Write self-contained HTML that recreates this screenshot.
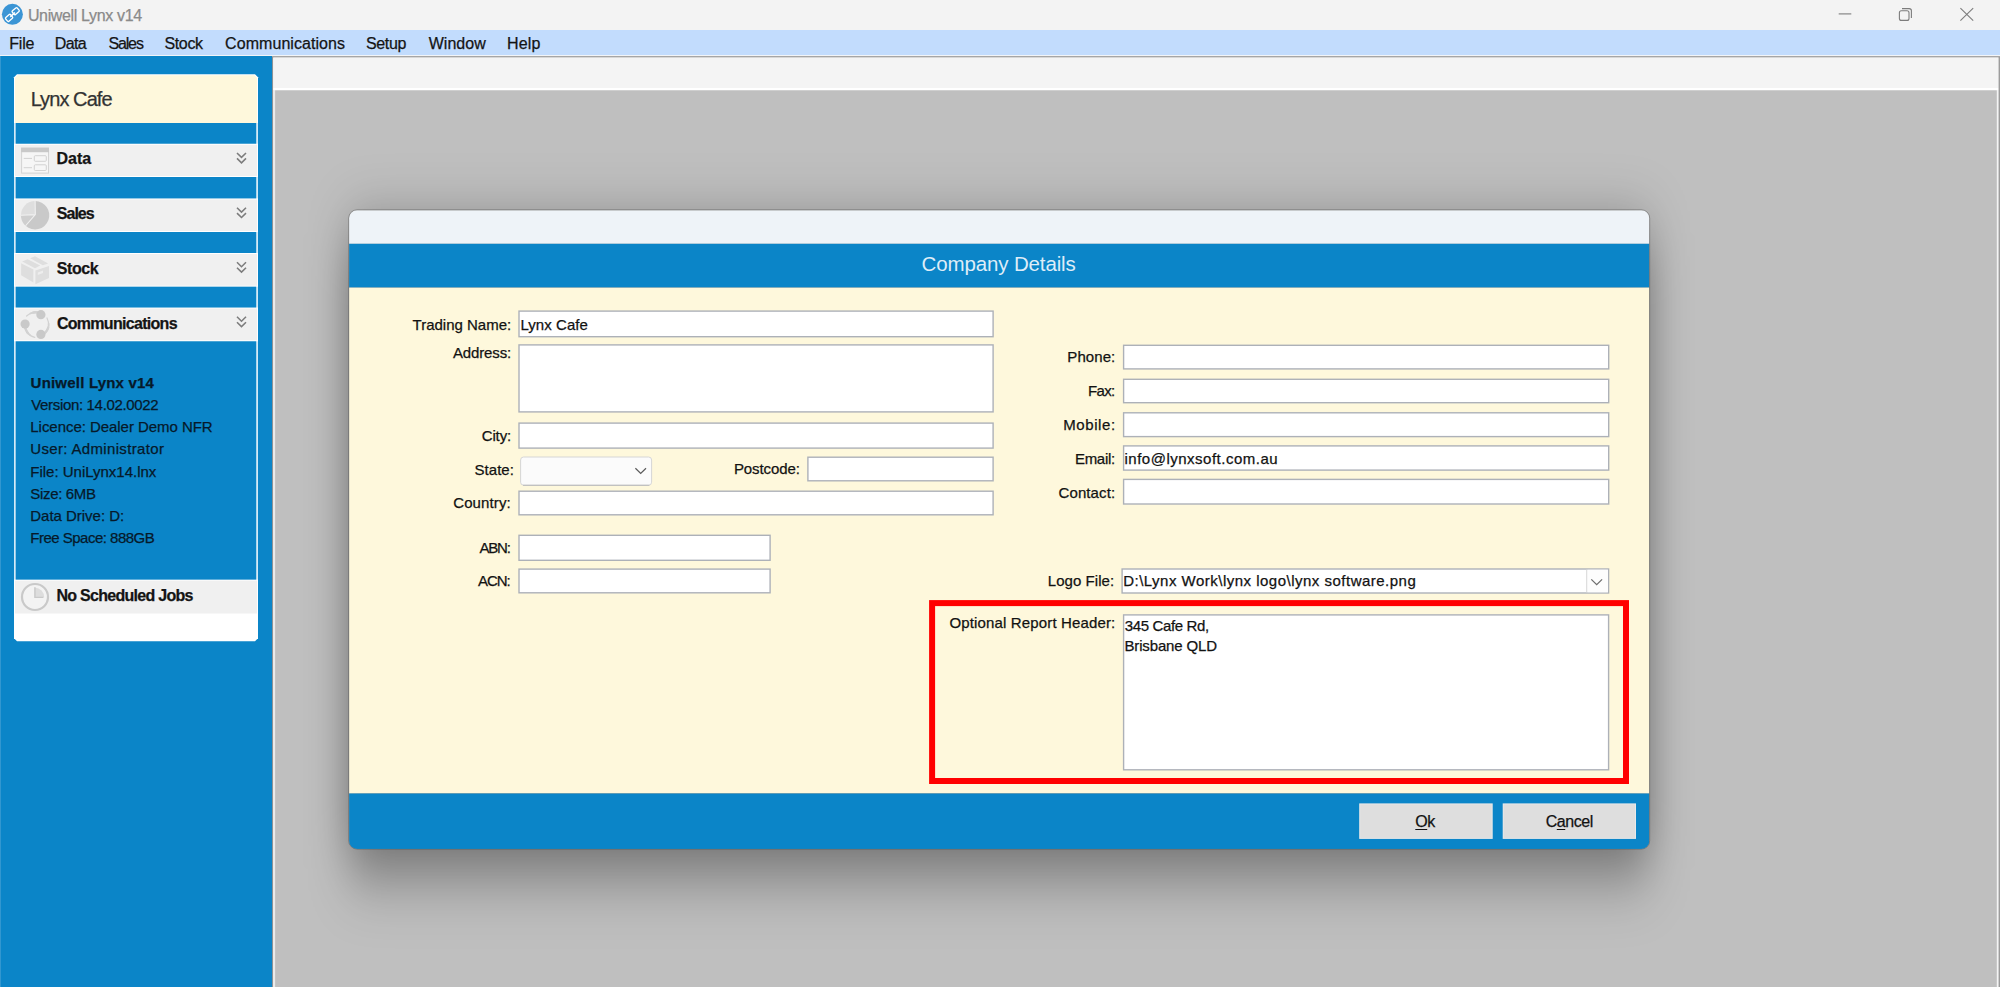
<!DOCTYPE html>
<html lang="en"><head><meta charset="utf-8"><title>Uniwell Lynx v14</title>
<style>
html,body{margin:0;padding:0}
body{width:2000px;height:987px;overflow:hidden;position:relative;background:#f3f3f3;font-family:"Liberation Sans",sans-serif}
.t{position:absolute;white-space:pre;line-height:1;margin:0;padding:0;-webkit-text-stroke:0.25px currentColor}
.t u{text-decoration:underline;text-underline-offset:2px;text-decoration-thickness:1px}
.layer{position:absolute;left:0;top:0;width:2000px;height:987px;display:block}

</style></head>
<body>
<svg id="bg" class="layer" width="2000" height="987" viewBox="0 0 2000 987">
<rect x="0.00" y="0.00" width="2000.00" height="30.00" fill="#f3f3f3" />
<rect x="0.00" y="30.00" width="2000.00" height="25.00" fill="#c2dcfd" />
<rect x="0.00" y="55.00" width="2000.00" height="1.00" fill="#f2f4f7" />
<rect x="0.00" y="56.00" width="272.00" height="931.00" fill="#0b85c8" />
<rect x="0.00" y="56.00" width="0.80" height="931.00" fill="#3c9bd2" />
<rect x="272.00" y="56.00" width="1728.00" height="1.60" fill="#a6a6a6" />
<rect x="272.00" y="57.00" width="1.20" height="930.00" fill="#8c9296" />
<rect x="273.20" y="57.60" width="1725.40" height="30.40" fill="#f4f4f4" />
<rect x="273.20" y="88.00" width="1725.40" height="2.30" fill="#ffffff" />
<rect x="273.20" y="90.30" width="1.90" height="896.70" fill="#ebebeb" />
<rect x="275.10" y="90.30" width="1721.80" height="896.70" fill="#bfbfbf" />
<rect x="1996.90" y="90.30" width="1.70" height="896.70" fill="#f4f4f4" />
<rect x="1998.60" y="57.00" width="1.40" height="930.00" fill="#9c9c9c" />
<circle cx="12.4" cy="14.3" r="10.5" fill="#3b95d5"/>
<g fill="none" stroke="#ffffff" stroke-width="1.3"><rect x="-3.25" y="-2.4" width="6.5" height="4.8" rx="1" transform="translate(15.7,11.2) rotate(-41)"/><rect x="-3.25" y="-2.4" width="6.5" height="4.8" rx="1" transform="translate(9.1,17.9) rotate(-41)"/><path d="M10.3 16.8 L14.9 12.5" stroke-width="1.6"/></g>
<g fill="none" stroke="#7c7c7c" stroke-width="1.1"><path d="M1838.7 13.9 H1851.3"/><rect x="1899.4" y="10.8" width="9.6" height="9.6" rx="2"/><path d="M1902 8.6 H1909.2 Q1911.4 8.6 1911.4 10.8 V18"/><path d="M1960.4 8.2 L1973.2 20.6 M1973.2 8.2 L1960.4 20.6"/></g>
<polygon points="17,74.3 255,74.3 258,77.3 258,638.3 255,641.3 17,641.3 14,638.3 14,77.3" fill="#ffffff"/>
<polygon points="17.6,75.3 254.4,75.3 257,77.89999999999999 257,123 15,123 15,77.89999999999999" fill="#fef8dc"/>
<rect x="14.00" y="123.00" width="244.00" height="20.70" fill="#d4eaf7" />
<rect x="15.70" y="123.00" width="240.50" height="20.70" fill="#0b85c8" />
<rect x="14.00" y="177.00" width="244.00" height="21.40" fill="#d4eaf7" />
<rect x="15.70" y="177.00" width="240.50" height="21.40" fill="#0b85c8" />
<rect x="14.00" y="232.00" width="244.00" height="21.00" fill="#d4eaf7" />
<rect x="15.70" y="232.00" width="240.50" height="21.00" fill="#0b85c8" />
<rect x="14.00" y="286.70" width="244.00" height="20.80" fill="#d4eaf7" />
<rect x="15.70" y="286.70" width="240.50" height="20.80" fill="#0b85c8" />
<rect x="14.00" y="341.30" width="244.00" height="238.30" fill="#d4eaf7" />
<rect x="15.70" y="341.30" width="240.50" height="238.30" fill="#0b85c8" />
<rect x="15.00" y="144.70" width="242.00" height="31.30" fill="#f0f0f0" />
<rect x="15.00" y="199.40" width="242.00" height="31.60" fill="#f0f0f0" />
<rect x="15.00" y="254.00" width="242.00" height="31.70" fill="#f0f0f0" />
<rect x="15.00" y="308.50" width="242.00" height="31.80" fill="#f0f0f0" />
<rect x="15.00" y="580.60" width="242.00" height="32.90" fill="#f0f0f0" />
<path d="M237 153.00 L241.5 157.40 L246 153.00 M237 158.40 L241.5 162.80 L246 158.40" fill="none" stroke="#7d7d7d" stroke-width="1.55"/>
<path d="M237 207.70 L241.5 212.10 L246 207.70 M237 213.10 L241.5 217.50 L246 213.10" fill="none" stroke="#7d7d7d" stroke-width="1.55"/>
<path d="M237 262.30 L241.5 266.70 L246 262.30 M237 267.70 L241.5 272.10 L246 267.70" fill="none" stroke="#7d7d7d" stroke-width="1.55"/>
<path d="M237 316.80 L241.5 321.20 L246 316.80 M237 322.20 L241.5 326.60 L246 322.20" fill="none" stroke="#7d7d7d" stroke-width="1.55"/>
<rect x="21.6" y="148.2" width="26.9" height="24.9" fill="#f6f6f6" stroke="#d3d3d3" stroke-width="1"/>
<rect x="21.10" y="147.70" width="27.90" height="4.50" fill="#c9c9c9" />
<g fill="none" stroke="#d2d2d2" stroke-width="1"><path d="M23.7 158.4 H32 M23.7 167.7 H32"/><rect x="34.3" y="155.7" width="12" height="5.6" rx="1"/><rect x="34.3" y="164.8" width="12" height="5.7" rx="1"/></g>
<path d="M35.3 214.6 L35.10 201.00 A14.2 14.2 0 1 1 25.60 225.75 Z" fill="#c9c9c9"/>
<path d="M35.3 214.6 L25.60 225.75 A14.2 14.2 0 0 1 20.90 215.20 Z" fill="#cfcfcf"/>
<path d="M35.3 214.6 L20.90 215.20 A14.2 14.2 0 0 1 35.10 201.00 Z" fill="#dedede"/>
<path d="M35.10 201.00 L35.3 214.6 L25.60 225.75 M35.3 214.6 L20.90 215.20" fill="none" stroke="#efefef" stroke-width="1.1"/>
<g fill="#dedede"><polygon points="21.1,263.2 33.4,269.6 33.4,282.6 21.1,275.2"/><polygon points="35.4,270.4 49,266 49,278 35.4,284.2"/><polygon points="22.2,261.4 27.6,259.3 40.2,265.6 35,268.2"/><polygon points="30.2,258.2 35,256.3 48.2,263.4 42.8,265.2"/></g>
<polygon points="37.8,272.4 43,270.4 43,273 37.8,275" fill="#ededed"/>
<g fill="none" stroke="#d2d2d2" stroke-linecap="round"><path d="M26.60 316.00 Q31.50 311.40 38.00 312.50" stroke-width="1.2"/><path d="M30.23 313.48 Q33.77 311.78 38.00 312.50" stroke-width="1.7"/><path d="M33.29 312.49 Q35.53 312.08 38.00 312.50" stroke-width="2.4"/><path d="M47.00 318.00 Q51.20 326.50 45.00 333.00" stroke-width="1.2"/><path d="M48.67 323.71 Q49.03 328.77 45.00 333.00" stroke-width="1.7"/><path d="M48.21 327.77 Q47.36 330.53 45.00 333.00" stroke-width="2.4"/><path d="M34.80 337.30 Q27.60 335.60 25.30 328.20" stroke-width="1.2"/><path d="M30.36 335.41 Q26.80 333.01 25.30 328.20" stroke-width="1.7"/><path d="M27.76 333.00 Q26.17 331.01 25.30 328.20" stroke-width="2.4"/></g>
<g fill="#c9c9c9"><circle cx="40.9" cy="314.7" r="4.6"/><circle cx="25.1" cy="324" r="4.6"/><circle cx="40.9" cy="334.4" r="4.6"/></g>
<circle cx="35" cy="597" r="13" fill="#f3f3f3" stroke="#c9c9c9" stroke-width="2.2"/>
<path d="M34.9 597.3 V587.4 A9.9 9.9 0 0 1 44.2 597.3 Z" fill="#dddddd"/>
<path d="M34.9 587.2 V597.4 H43.4" fill="none" stroke="#c9c9c9" stroke-width="1.4"/>
<filter id="sh" x="-10%" y="-25%" width="120%" height="160%" color-interpolation-filters="sRGB"><feGaussianBlur stdDeviation="20 34.5"/></filter>
<rect x="349" y="231.6" width="1300.3" height="638.8" rx="8" fill="#000000" fill-opacity="0.44" filter="url(#sh)"/>
</svg>
<svg id="fg" class="layer" width="2000" height="987" viewBox="0 0 2000 987">
<clipPath id="dc"><rect x="349.1" y="210.3" width="1300.20" height="638.60" rx="8"/></clipPath>
<rect x="348.70000000000005" y="209.8" width="1301.00" height="639.30" rx="8.4" fill="none" stroke="rgba(50,50,50,.36)" stroke-width="0.9"/>
<g clip-path="url(#dc)">
<rect x="349.10" y="210.30" width="1300.20" height="33.50" fill="#eef3f8" />
<rect x="349.10" y="243.80" width="1300.20" height="43.80" fill="#0b85c8" />
<rect x="349.10" y="287.60" width="1300.20" height="505.90" fill="#fef8dc" />
<rect x="349.10" y="793.50" width="1300.20" height="55.40" fill="#0b85c8" />
</g>
<rect x="519.00" y="311.10" width="474.10" height="25.60" fill="#ffffff" stroke="#adb1b8" stroke-width="1.4"/>
<rect x="519.00" y="344.90" width="474.10" height="67.00" fill="#ffffff" stroke="#adb1b8" stroke-width="1.4"/>
<rect x="519.00" y="423.10" width="474.10" height="25.00" fill="#ffffff" stroke="#adb1b8" stroke-width="1.4"/>
<rect x="807.90" y="457.20" width="185.20" height="23.60" fill="#ffffff" stroke="#adb1b8" stroke-width="1.4"/>
<rect x="519.00" y="491.20" width="474.10" height="23.60" fill="#ffffff" stroke="#adb1b8" stroke-width="1.4"/>
<rect x="519.00" y="535.30" width="251.10" height="25.00" fill="#ffffff" stroke="#adb1b8" stroke-width="1.4"/>
<rect x="519.00" y="569.10" width="251.10" height="23.70" fill="#ffffff" stroke="#adb1b8" stroke-width="1.4"/>
<rect x="520.6" y="457" width="131" height="28.2" rx="3" fill="#fbfbfb" stroke="#d6d6d6" stroke-width="1"/>
<path d="M523 485.3 H649.4" stroke="#b9b9b9" stroke-width="1" fill="none"/>
<path d="M635.4 468.2 L640.7 473.4 L646 468.2" fill="none" stroke="#5a5a5a" stroke-width="1.2"/>
<rect x="1123.60" y="345.30" width="485.10" height="23.60" fill="#ffffff" stroke="#adb1b8" stroke-width="1.4"/>
<rect x="1123.60" y="379.30" width="485.10" height="23.40" fill="#ffffff" stroke="#adb1b8" stroke-width="1.4"/>
<rect x="1123.60" y="412.80" width="485.10" height="23.80" fill="#ffffff" stroke="#adb1b8" stroke-width="1.4"/>
<rect x="1123.60" y="445.90" width="485.10" height="24.20" fill="#ffffff" stroke="#adb1b8" stroke-width="1.4"/>
<rect x="1123.60" y="479.40" width="485.10" height="24.60" fill="#ffffff" stroke="#adb1b8" stroke-width="1.4"/>
<rect x="1122.10" y="569.00" width="486.50" height="24.00" fill="#ffffff" stroke="#adb1b8" stroke-width="1.4"/>
<rect x="1586.10" y="569.70" width="1.40" height="22.60" fill="#dcdcdc" />
<rect x="1587.50" y="569.70" width="20.40" height="22.60" fill="#fdfdfd" />
<path d="M1591.3 579.4 L1596.7 584.7 L1602.1 579.4" fill="none" stroke="#6e6e6e" stroke-width="1.3"/>
<rect x="1123.60" y="614.90" width="485.00" height="154.90" fill="#ffffff" stroke="#adb1b8" stroke-width="1.4"/>
<rect x="932.1" y="603.1" width="693.9" height="177.9" fill="none" stroke="#ff0000" stroke-width="6"/>
<rect x="1359.20" y="803.40" width="133.50" height="35.50" fill="#e9e9e9" />
<rect x="1360.20" y="804.40" width="131.50" height="33.50" fill="#dedede" />
<rect x="1502.70" y="803.40" width="133.30" height="35.50" fill="#e9e9e9" />
<rect x="1503.70" y="804.40" width="131.30" height="33.50" fill="#dedede" />
</svg>
<div class="t" style="left:27.91px;top:8px;font-size:16px;color:#8a8a8a;letter-spacing:-0.353px;">Uniwell Lynx v14</div>
<div class="t" style="left:9.34px;top:36px;font-size:16px;color:#141414;letter-spacing:-0.239px;">File</div>
<div class="t" style="left:54.84px;top:36px;font-size:16px;color:#141414;letter-spacing:-0.679px;">Data</div>
<div class="t" style="left:108.39px;top:36px;font-size:16px;color:#141414;letter-spacing:-1.130px;">Sales</div>
<div class="t" style="left:164.39px;top:36px;font-size:16px;color:#141414;letter-spacing:-0.324px;">Stock</div>
<div class="t" style="left:225.07px;top:36px;font-size:16px;color:#141414;letter-spacing:0.063px;">Communications</div>
<div class="t" style="left:365.99px;top:36px;font-size:16px;color:#141414;letter-spacing:-0.353px;">Setup</div>
<div class="t" style="left:428.73px;top:36px;font-size:16px;color:#141414;letter-spacing:0.022px;">Window</div>
<div class="t" style="left:507.04px;top:36px;font-size:16px;color:#141414;letter-spacing:0.182px;">Help</div>
<div class="t" style="left:30.64px;top:89px;font-size:20px;color:#333333;letter-spacing:-0.917px;">Lynx Cafe</div>
<div class="t" style="left:56.50px;top:151px;font-size:16px;color:#141414;letter-spacing:-0.032px;font-weight:700;">Data</div>
<div class="t" style="left:56.87px;top:206px;font-size:16px;color:#141414;letter-spacing:-1.023px;font-weight:700;">Sales</div>
<div class="t" style="left:56.87px;top:261px;font-size:16px;color:#141414;letter-spacing:-0.422px;font-weight:700;">Stock</div>
<div class="t" style="left:56.90px;top:316px;font-size:16px;color:#141414;letter-spacing:-0.701px;font-weight:700;">Communications</div>
<div class="t" style="left:30.62px;top:375px;font-size:15px;color:#06192a;letter-spacing:0.200px;font-weight:700;">Uniwell Lynx v14</div>
<div class="t" style="left:31.25px;top:397px;font-size:15px;color:#06192a;letter-spacing:-0.334px;">Version: 14.02.0022</div>
<div class="t" style="left:30.31px;top:419px;font-size:15px;color:#06192a;letter-spacing:-0.044px;">Licence: Dealer Demo NFR</div>
<div class="t" style="left:30.37px;top:441px;font-size:15px;color:#06192a;letter-spacing:0.332px;">User: Administrator</div>
<div class="t" style="left:30.31px;top:464px;font-size:15px;color:#06192a;letter-spacing:-0.010px;">File: UniLynx14.lnx</div>
<div class="t" style="left:30.32px;top:486px;font-size:15px;color:#06192a;letter-spacing:-0.334px;">Size: 6MB</div>
<div class="t" style="left:30.31px;top:508px;font-size:15px;color:#06192a;letter-spacing:-0.024px;">Data Drive: D:</div>
<div class="t" style="left:30.31px;top:530px;font-size:15px;color:#06192a;letter-spacing:-0.509px;">Free Space: 888GB</div>
<div class="t" style="left:56.50px;top:588px;font-size:16px;color:#141414;letter-spacing:-0.717px;font-weight:700;">No Scheduled Jobs</div>
<div class="t" style="left:921.60px;top:254px;font-size:20.5px;color:#deedf8;letter-spacing:-0.138px;-webkit-text-stroke:0;">Company Details</div>
<div class="t" style="left:412.60px;top:317px;font-size:15px;color:#121212;letter-spacing:-0.009px;">Trading Name:</div>
<div class="t" style="left:452.89px;top:345px;font-size:15px;color:#121212;letter-spacing:-0.127px;">Address:</div>
<div class="t" style="left:481.70px;top:428px;font-size:15px;color:#121212;letter-spacing:-0.124px;">City:</div>
<div class="t" style="left:474.52px;top:462px;font-size:15px;color:#121212;letter-spacing:0.035px;">State:</div>
<div class="t" style="left:733.91px;top:461px;font-size:15px;color:#121212;letter-spacing:-0.078px;">Postcode:</div>
<div class="t" style="left:453.20px;top:495px;font-size:15px;color:#121212;letter-spacing:0.127px;">Country:</div>
<div class="t" style="left:479.49px;top:540px;font-size:15px;color:#121212;letter-spacing:-1.227px;">ABN:</div>
<div class="t" style="left:478.09px;top:573px;font-size:15px;color:#121212;letter-spacing:-1.094px;">ACN:</div>
<div class="t" style="left:1067.31px;top:349px;font-size:15px;color:#121212;letter-spacing:0.089px;">Phone:</div>
<div class="t" style="left:1087.91px;top:383px;font-size:15px;color:#121212;letter-spacing:-0.638px;">Fax:</div>
<div class="t" style="left:1063.21px;top:417px;font-size:15px;color:#121212;letter-spacing:0.590px;">Mobile:</div>
<div class="t" style="left:1074.91px;top:451px;font-size:15px;color:#121212;letter-spacing:-0.284px;">Email:</div>
<div class="t" style="left:1058.60px;top:485px;font-size:15px;color:#121212;letter-spacing:0.086px;">Contact:</div>
<div class="t" style="left:1047.81px;top:573px;font-size:15px;color:#121212;letter-spacing:0.044px;">Logo File:</div>
<div class="t" style="left:949.45px;top:615px;font-size:15px;color:#121212;letter-spacing:0.147px;">Optional Report Header:</div>
<div class="t" style="left:520.41px;top:317px;font-size:15px;color:#121212;letter-spacing:0.070px;">Lynx Cafe</div>
<div class="t" style="left:1124.50px;top:451px;font-size:15px;color:#121212;letter-spacing:0.499px;">info@lynxsoft.com.au</div>
<div class="t" style="left:1123.21px;top:573px;font-size:15px;color:#121212;letter-spacing:0.490px;">D:\Lynx Work\lynx logo\lynx software.png</div>
<div class="t" style="left:1124.84px;top:618px;font-size:15px;color:#121212;letter-spacing:-0.374px;">345 Cafe Rd,</div>
<div class="t" style="left:1124.41px;top:638px;font-size:15px;color:#121212;letter-spacing:-0.140px;">Brisbane QLD</div>
<div class="t" style="left:1415.30px;top:814px;font-size:16px;color:#121212;letter-spacing:-0.509px;"><u>O</u>k</div>
<div class="t" style="left:1545.67px;top:814px;font-size:16px;color:#121212;letter-spacing:-0.434px;">C<u>a</u>ncel</div>
</body></html>
